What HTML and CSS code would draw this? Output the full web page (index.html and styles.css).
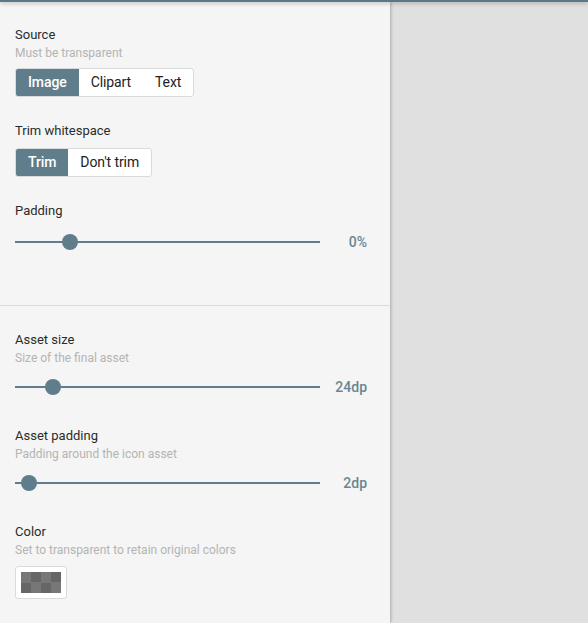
FILE: index.html
```html
<!DOCTYPE html>
<html>
<head>
<meta charset="utf-8">
<link rel="stylesheet" href="styles.css">
</head>
<body>
<div class="topbar"></div>
<div class="main">
  <div class="panel">
    <div class="section section--first">
      <div class="field">
        <div class="label">Source</div>
        <div class="sub">Must be transparent</div>
        <div class="btn-group btn-group--after-sub">
          <div class="btn btn--active">Image</div>
          <div class="btn">Clipart</div>
          <div class="btn">Text</div>
        </div>
      </div>
      <div class="field">
        <div class="label">Trim whitespace</div>
        <div class="btn-group">
          <div class="btn btn--active">Trim</div>
          <div class="btn">Don't trim</div>
        </div>
      </div>
      <div class="field">
        <div class="label">Padding</div>
        <div class="slider-row">
          <div class="track"><div class="thumb" style="left:55px"></div></div>
          <div class="value">0%</div>
        </div>
      </div>
    </div>
    <div class="section section--second">
      <div class="field">
        <div class="label">Asset size</div>
        <div class="sub">Size of the final asset</div>
        <div class="slider-row slider-row--after-sub">
          <div class="track"><div class="thumb" style="left:38px"></div></div>
          <div class="value">24dp</div>
        </div>
      </div>
      <div class="field">
        <div class="label">Asset padding</div>
        <div class="sub">Padding around the icon asset</div>
        <div class="slider-row slider-row--after-sub">
          <div class="track"><div class="thumb" style="left:14px"></div></div>
          <div class="value">2dp</div>
        </div>
      </div>
      <div class="field">
        <div class="label">Color</div>
        <div class="sub">Set to transparent to retain original colors</div>
        <div class="swatch"><div class="checker"></div></div>
      </div>
    </div>
  </div>
  <div class="stage"></div>
</div>
</body>
</html>
```

FILE: styles.css
```css
* { box-sizing: border-box; }
html, body {
  margin: 0;
  padding: 0;
  height: 100%;
  overflow: hidden;
}
body {
  font-family: Roboto, "Liberation Sans", sans-serif;
  background: #e0e0e0;
  display: flex;
  flex-direction: column;
}
.topbar {
  height: 2px;
  background: #5a7887;
  box-shadow: 0 1px 4px rgba(0, 0, 0, 0.35);
  position: relative;
  z-index: 2;
  flex: none;
}
.main {
  flex: 1;
  display: flex;
  min-height: 0;
}
.panel {
  width: 390px;
  flex: none;
  background: #f5f5f5;
  box-shadow: 1px 0 3px rgba(0, 0, 0, 0.25);
  position: relative;
  z-index: 1;
}
.stage {
  flex: 1;
  background: #e0e0e0;
}
.section {
  display: flex;
  flex-direction: column;
  padding-left: 15px;
  padding-right: 23px;
}
.section--first {
  padding-top: 25px;
  padding-bottom: 47px;
  gap: 26px;
  border-bottom: 1px solid #dcdcdc;
}
.section--second {
  padding-top: 26px;
  gap: 25px;
}
.label {
  font-size: 13px;
  line-height: 16px;
  color: #2b2b2b;
}
.sub {
  font-size: 12px;
  line-height: 16px;
  color: #b4b4b4;
  margin-top: 2px;
}
.btn-group {
  display: inline-flex;
  align-self: flex-start;
  margin-top: 9px;
  border: 1px solid #dadada;
  border-radius: 3px;
  background: #fff;
  overflow: hidden;
}
.field {
  display: flex;
  flex-direction: column;
}
.btn-group--after-sub {
  margin-top: 7px;
}
.btn {
  height: 27px;
  line-height: 27px;
  padding: 0 12px;
  font-size: 14px;
  letter-spacing: -0.1px;
  color: #222;
}
.btn--active {
  background: #607d8b;
  color: #fff;
  font-weight: 500;
}
.slider-row {
  display: flex;
  align-items: center;
  height: 32px;
  margin-top: 7px;
}
.slider-row--after-sub {
  margin-top: 5px;
}
.track {
  flex: 1;
  height: 2px;
  background: #607d8b;
  position: relative;
}
.thumb {
  position: absolute;
  top: -7px;
  width: 16px;
  height: 16px;
  margin-left: -8px;
  border-radius: 50%;
  background: #607d8b;
}
.value {
  width: 47px;
  text-align: right;
  font-size: 14px;
  font-weight: 500;
  color: #6a8693;
}
.swatch {
  align-self: flex-start;
  margin-top: 8px;
  width: 52px;
  height: 33px;
  padding: 5px 5px 6px;
  background: #fff;
  border: 1px solid #dadada;
  border-radius: 3px;
}
.checker {
  width: 40px;
  height: 21px;
  background-color: #777;
  background-image: conic-gradient(#666 25%, transparent 0 50%, #666 0 75%, transparent 0);
  background-size: 20px 21px;
}
```
